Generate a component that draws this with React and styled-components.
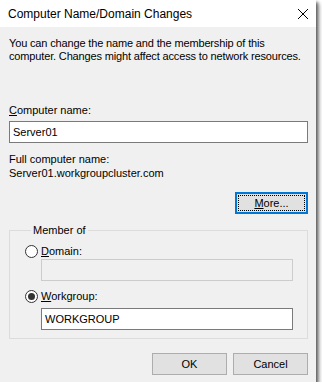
import React from 'react';
import styled, { createGlobalStyle } from 'styled-components';

const Global = createGlobalStyle`
  html, body {
    margin: 0;
    background: #ffffff;
  }
  body {
    font-family: "Liberation Sans", Arial, sans-serif;
    font-size: 11px;
    color: #000;
  }
`;

const Dialog = styled.div`
  width: 316px;
  height: 382px;
  background: #f0f0f0;
  box-shadow: 2px 2px 3px rgba(0, 0, 0, 0.55), 4px 4px 4px rgba(0, 0, 0, 0.2);
  display: flex;
  flex-direction: column;
`;

const TitleBar = styled.div`
  height: 27px;
  background: #ffffff;
  display: flex;
  align-items: center;
  justify-content: space-between;
  padding: 0 7px 0 8px;
  font-size: 12px;
`;

const Body = styled.div`
  padding: 10px 8px 0 9px;
  display: flex;
  flex-direction: column;
`;

const Text = styled.div`
  line-height: 13px;
  white-space: nowrap;
  letter-spacing: ${p => p.$tight ? '-0.15px' : 'normal'};
  margin-top: ${p => p.$top || 0}px;
`;

const Key = styled.span`
  text-decoration: underline;
  text-underline-offset: 1px;
`;

const TextBox = styled.div`
  box-sizing: border-box;
  height: 22px;
  margin: ${p => p.$margin || '0'};
  border: 1px solid ${p => (p.$disabled ? '#cccccc' : '#7a7a7a')};
  background: ${p => (p.$disabled ? '#f0f0f0' : '#ffffff')};
  padding: 0 3px;
  display: flex;
  align-items: center;
  font-size: 11px;
`;

const ButtonRow = styled.div`
  display: flex;
  justify-content: flex-end;
  gap: 6px;
  margin-top: ${p => p.$top || 0}px;
`;

const Button = styled.div`
  box-sizing: border-box;
  width: ${p => p.$width || 75}px;
  height: 22px;
  background: #e1e1e1;
  border: ${p => (p.$focused ? '2px solid #0078d7' : '1px solid #adadad')};
  display: flex;
  align-items: center;
  justify-content: center;
  padding: 1px;
  font-size: 11px;
`;

const FocusRect = styled.div`
  flex: 1;
  align-self: stretch;
  border: 1px dotted #000;
  display: flex;
  align-items: center;
  justify-content: center;
`;

const Group = styled.fieldset`
  margin: 10px 0 0 0;
  padding: 0 14px 11px 15px;
  border: 1px solid #dcdcdc;
  height: 115px;
  box-sizing: border-box;
`;

const Legend = styled.legend`
  padding: 0 2px;
  margin-left: 6px;
  line-height: 13px;
`;

const Radio = styled.div`
  display: flex;
  align-items: center;
  gap: 3px;
  margin-top: ${p => p.$top || 0}px;
  line-height: 13px;
`;

const RadioDot = styled.span`
  box-sizing: border-box;
  width: 13px;
  height: 13px;
  border-radius: 50%;
  border: 1px solid #333;
  background: #fff;
  display: flex;
  align-items: center;
  justify-content: center;
  &::after {
    content: '';
    width: 7px;
    height: 7px;
    border-radius: 50%;
    background: ${p => (p.$checked ? '#333' : 'transparent')};
  }
`;

const Indented = styled.div`
  margin-left: 16px;
`;

const CloseIcon = () => (
  <svg width="12" height="12" viewBox="0 0 12 12">
    <path d="M1 1 L11 11 M11 1 L1 11" stroke="#000" strokeWidth="1" />
  </svg>
);

export default function App() {
  return (
    <>
      <Global />
      <Dialog>
        <TitleBar>
          <span>Computer Name/Domain Changes</span>
          <CloseIcon />
        </TitleBar>
        <Body>
          <Text $tight>
            You can change the name and the membership of this
            <br />
            computer. Changes might affect access to network resources.
          </Text>
          <Text $top={41}>
            <Key>C</Key>omputer name:
          </Text>
          <TextBox $margin="4px 0 0 0">Server01</TextBox>
          <Text $top={10}>Full computer name:</Text>
          <Text $top={1}>Server01.workgroupcluster.com</Text>
          <ButtonRow $top={12}>
            <Button $focused $width={73}>
              <FocusRect>
                <Key>M</Key>ore...
              </FocusRect>
            </Button>
          </ButtonRow>
          <Group>
            <Legend>Member of</Legend>
            <Radio $top={8}>
              <RadioDot />
              <span>
                <Key>D</Key>omain:
              </span>
            </Radio>
            <Indented>
              <TextBox $disabled $margin="1px 0 0 0" />
            </Indented>
            <Radio $top={9}>
              <RadioDot $checked />
              <span>
                <Key>W</Key>orkgroup:
              </span>
            </Radio>
            <Indented>
              <TextBox $margin="5px 0 0 0">WORKGROUP</TextBox>
            </Indented>
          </Group>
          <ButtonRow $top={14}>
            <Button>OK</Button>
            <Button>Cancel</Button>
          </ButtonRow>
        </Body>
      </Dialog>
    </>
  );
}
